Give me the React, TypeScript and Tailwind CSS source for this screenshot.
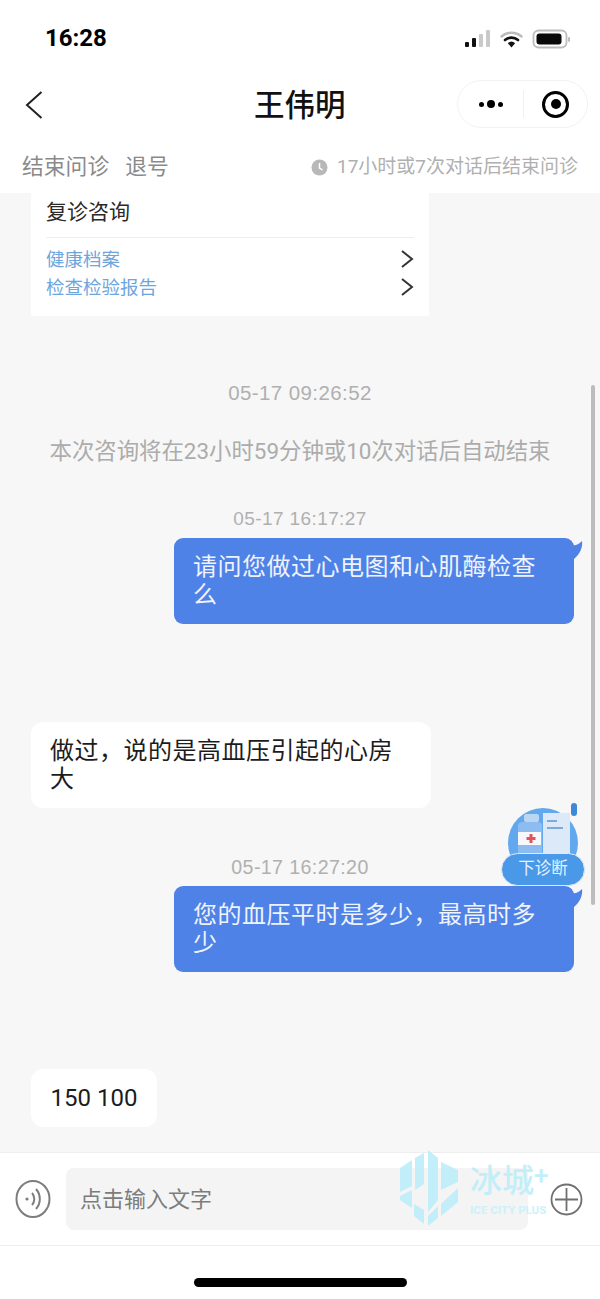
const font = "font-['Roboto','Noto_Sans_CJK_SC',sans-serif]";

function StatusIcons() {
  return (
    <svg width="108" height="20" viewBox="0 0 108 20" className="block">
      {/* signal */}
      <rect x="1" y="13" width="4" height="5" rx="1" fill="#111" />
      <rect x="8" y="9" width="4" height="9" rx="1" fill="#111" />
      <rect x="15" y="5" width="4" height="13" rx="1" fill="#c9c9c9" />
      <rect x="22" y="1" width="4" height="17" rx="1" fill="#c9c9c9" />
      {/* wifi */}
      <path d="M37.5 7.5a15 15 0 0 1 20 0" fill="none" stroke="#bbb" strokeWidth="2.4" strokeLinecap="round" />
      <path d="M41 11a10 10 0 0 1 13 0" fill="none" stroke="#111" strokeWidth="2.6" strokeLinecap="round" />
      <path d="M47.5 18.5l-3.6-4.3a5.4 5.4 0 0 1 7.2 0z" fill="#111" />
      {/* battery */}
      <rect x="69.5" y="1.5" width="33" height="17" rx="5" fill="none" stroke="#bdbdbd" strokeWidth="1.8" />
      <rect x="72.5" y="4.5" width="25" height="11" rx="3" fill="#0a0a0a" />
      <rect x="104" y="8" width="2" height="5" rx="1" fill="#bdbdbd" />
    </svg>
  );
}

function Timestamp({ text, className }: { text: string; className: string }) {
  return (
    <div className={`text-center font-['Liberation_Sans',sans-serif] leading-[24px] tracking-[0.4px] text-[#b0b0b0] ${className}`}>
      {text}
    </div>
  );
}

function BubbleTail() {
  return (
    <svg width="12" height="22" viewBox="0 0 12 22" className="absolute left-full top-[2px] -ml-[2px]">
      <path d="M0 5c3 1 6 0 10-4 1 6-2 13-8 18-1 0-2-1-2-2z" fill="#4f82e6" />
    </svg>
  );
}

function CardChevron() {
  return (
    <svg width="14" height="20" viewBox="0 0 14 20" className="shrink-0">
      <path d="M2 2l10 8-10 8" fill="none" stroke="#333" strokeWidth="2" />
    </svg>
  );
}

function FloatingDiagnosis() {
  return (
    <div className="absolute left-[501px] top-[800px] h-[86px] w-[84px]">
      <svg width="84" height="62" viewBox="0 0 84 62" className="absolute left-0 top-0">
        <circle cx="42" cy="43" r="35" fill="#62a8ee" />
        <rect x="70" y="3" width="6" height="13" rx="3" fill="#3f88d8" />
        <rect x="23" y="14" width="15" height="8" rx="2" fill="#b9d6f3" />
        <path d="M17 26q0-4 4-4h16q4 0 4 4v31H17z" fill="#8dbdf0" />
        <rect x="17" y="32" width="23" height="13" fill="#f6f8fb" />
        <rect x="28.5" y="34" width="3" height="9" fill="#e0545c" />
        <rect x="25.5" y="37" width="9" height="3" fill="#e0545c" />
        <rect x="42" y="13" width="27" height="45" fill="#dce9f8" />
        <rect x="46" y="20" width="10" height="2" fill="#7fa9d6" />
        <rect x="46" y="27" width="16" height="2" fill="#7fa9d6" />
      </svg>
      <div className="absolute bottom-0 left-0 flex h-[33px] w-[84px] items-center justify-center rounded-full border border-[#dcebfb] bg-[#4a98e8] text-[16.5px] text-[#e6f2ff]">
        下诊断
      </div>
    </div>
  );
}

function Watermark() {
  return (
    <div className="pointer-events-none absolute left-[400px] top-[1150px] flex opacity-90">
      <svg width="60" height="76" viewBox="0 0 60 76" fill="#bdeefa">
        <polygon points="0,18 12,10 12,36 0,42" />
        <polygon points="15,8 24,3 24,34 15,40" />
        <polygon points="28,0 38,8 38,50 28,62" />
        <polygon points="0,46 12,40 12,58 0,50" />
        <polygon points="14,54 24,60 24,74 14,66" />
        <polygon points="41,12 58,20 58,32 41,40" />
        <polygon points="41,54 58,38 58,52 41,66" />
        <polygon points="28,66 38,56 38,68 28,76" />
      </svg>
      <div className="ml-[10px] mt-[12px] flex flex-col">
        <div className="text-[32px] font-medium leading-[38px] text-[#bdeefa]">
          冰城<span className="align-top text-[26px] leading-none">+</span>
        </div>
        <div className="mt-[3px] whitespace-nowrap text-[11.5px] font-bold leading-[14px] text-[#c8f1fb]">ICE CITY PLUS</div>
      </div>
    </div>
  );
}

export default function App() {
  return (
    <div className={`relative flex h-[1299px] w-[600px] flex-col overflow-hidden bg-white ${font}`}>
      {/* 状态栏 */}
      <div className="flex h-[72px] items-start justify-between pl-[45px] pr-[28px] pt-[23px]">
        <span className="text-[24px] font-bold leading-[30px] text-black">16:28</span>
        <div className="mt-[6px]">
          <StatusIcons />
        </div>
      </div>

      {/* 导航 */}
      <div className="relative flex h-[68px] items-center justify-between pl-[25px] pr-[12px]">
        <svg width="18" height="28" viewBox="0 0 18 28" className="-mt-[3px]">
          <path d="M16.5 1L2 14l14.5 13" fill="none" stroke="#222" strokeWidth="2" />
        </svg>
        <div className="absolute left-[254px] top-[15px] text-[30.5px] font-medium leading-[38px] text-[#111]">王伟明</div>
        <div className="-mt-[4px] flex h-[48px] w-[131px] items-center rounded-full border border-[#f2f2f2]">
          <div className="flex w-[65px] items-center justify-center gap-[3px]">
            <span className="h-[5px] w-[5px] rounded-full bg-black" />
            <span className="h-[8px] w-[8px] rounded-full bg-black" />
            <span className="h-[5px] w-[5px] rounded-full bg-black" />
          </div>
          <div className="h-[28px] w-px bg-[#f0f0f0]" />
          <div className="flex flex-1 items-center justify-center">
            <div className="flex h-[27px] w-[27px] items-center justify-center rounded-full border-[3px] border-black">
              <span className="h-[10px] w-[10px] rounded-full bg-black" />
            </div>
          </div>
        </div>
      </div>

      {/* 问诊操作 */}
      <div className="flex h-[53px] items-center justify-between px-[22px] pt-[1px]">
        <div className="flex gap-[16px] text-[21.8px] leading-[28px] text-[#8a8a8a]">
          <span>结束问诊</span>
          <span>退号</span>
        </div>
        <div className="flex items-center gap-[9px] text-[19px] leading-[26px] text-[#b0b0b0]">
          <svg width="17" height="17" viewBox="0 0 17 17">
            <circle cx="8.5" cy="8.5" r="8" fill="#b8b8b8" />
            <path d="M8.5 4v5l3 2" fill="none" stroke="#fff" strokeWidth="1.5" />
          </svg>
          <span>17小时或7次对话后结束问诊</span>
        </div>
      </div>

      {/* 聊天内容 */}
      <div className="flex-1 overflow-hidden bg-[#f7f7f7]">
        <div className="ml-[31px] h-[123px] w-[398px] bg-white px-[15px]">
          <div className="flex h-[45px] items-center border-b border-[#eeeeee] pb-[4px] text-[21px] text-[#2a2a2a]">复诊咨询</div>
          <div className="mt-[7px] flex h-[28px] items-center justify-between text-[18.5px] text-[#6ea5dc]">
            <span className="pt-[3px]">健康档案</span>
            <CardChevron />
          </div>
          <div className="flex h-[28px] items-center justify-between text-[18.5px] text-[#6ea5dc]">
            <span className="pt-[3px]">检查检验报告</span>
            <CardChevron />
          </div>
        </div>

        <Timestamp text="05-17 09:26:52" className="mt-[65px] text-[20.5px]" />
        <div className="mt-[32px] text-center text-[22.4px] leading-[28px] text-[#acacac]">本次咨询将在23小时59分钟或10次对话后自动结束</div>

        <Timestamp text="05-17 16:17:27" className="mt-[42px] text-[19px]" />
        <div className="relative ml-[174px] mt-[7px] w-[400px] rounded-[9px] bg-[#4f82e6] pb-[15px] pl-[19px] pr-[20px] pt-[15px] text-[24px] leading-[28px] tracking-[0.5px] text-[#eef3fd]">
          请问您做过心电图和心肌酶检查么
          <BubbleTail />
        </div>

        <div className="ml-[31px] mt-[98px] w-[400px] rounded-[12px] bg-white pb-[15px] pl-[19px] pr-[20px] pt-[15px] text-[24px] leading-[28px] tracking-[0.5px] text-[#1c1c1c]">
          做过，说的是高血压引起的心房大
        </div>

        <Timestamp text="05-17 16:27:20" className="mt-[47px] text-[19.6px]" />
        <div className="relative ml-[174px] mt-[7px] w-[400px] rounded-[9px] bg-[#4f82e6] pb-[15px] pl-[19px] pr-[20px] pt-[15px] text-[24px] leading-[28px] tracking-[0.5px] text-[#eef3fd]">
          您的血压平时是多少，最高时多少
          <BubbleTail />
        </div>

        <div className="ml-[31px] mt-[97px] flex h-[58px] w-[126px] items-center justify-center rounded-[12px] bg-white text-[24px] text-[#1c1c1c]">
          150 100
        </div>
      </div>

      {/* 输入栏 */}
      <div className="flex h-[94px] items-center border-y border-[#eeeeee] bg-white pl-[15px] pr-[18px]">
        <svg width="36" height="38" viewBox="0 0 36 38" className="shrink-0">
          <ellipse cx="18" cy="19" rx="16.5" ry="18" fill="none" stroke="#7d7d7d" strokeWidth="2" />
          <circle cx="12" cy="19" r="1.6" fill="#7d7d7d" />
          <path d="M17 13a9 9 0 0 1 0 12" fill="none" stroke="#7d7d7d" strokeWidth="2" />
          <path d="M21 9a15 15 0 0 1 0 20" fill="none" stroke="#7d7d7d" strokeWidth="2" />
        </svg>
        <div className="ml-[15px] flex h-[62px] w-[462px] shrink-0 items-center rounded-[8px] bg-[#f4f4f4] pl-[14px] text-[22px] text-[#7c7c7c]">
          点击输入文字
        </div>
        <svg width="33" height="33" viewBox="0 0 33 33" className="ml-[22px] shrink-0">
          <circle cx="16.5" cy="16.5" r="15" fill="none" stroke="#6f6f6f" strokeWidth="1.8" />
          <path d="M5 16.5h23M16.5 5v23" stroke="#6f6f6f" strokeWidth="1.8" />
        </svg>
      </div>

      {/* Home 指示条 */}
      <div className="flex h-[53px] justify-center bg-white pt-[32px]">
        <div className="h-[9px] w-[213px] rounded-full bg-black" />
      </div>

      {/* 滚动条 */}
      <div className="absolute left-[591px] top-[385px] h-[520px] w-[4px] rounded-full bg-[#bcbcbc]" />
      <FloatingDiagnosis />
      <Watermark />
    </div>
  );
}
